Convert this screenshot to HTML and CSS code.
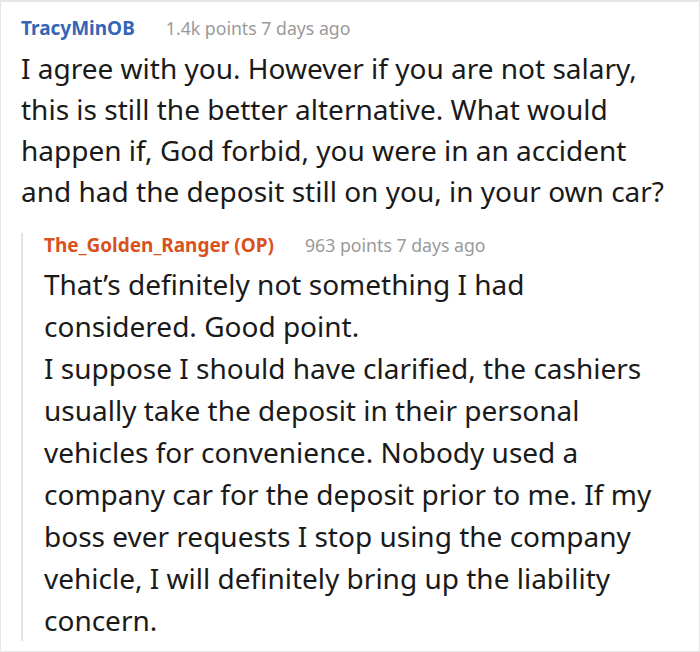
FILE: index.html
```html
<!DOCTYPE html>
<html>
<head>
<meta charset="utf-8">
<link rel="stylesheet" href="styles.css">
</head>
<body>
<div class="thread">
  <div class="comment">
    <div class="meta"><span class="user user-blue">TracyMinOB</span><span class="info">1.4k points 7 days ago</span></div>
    <p class="text">I agree with you. However if you are not salary, this is still the better alternative. What would happen if, God forbid, you were in an accident and had the deposit still on you, in your own car?</p>
    <div class="reply">
      <div class="meta"><span class="user user-orange">The_Golden_Ranger (OP)</span><span class="info">963 points 7 days ago</span></div>
      <p class="text">That’s definitely not something I had considered. Good point.<br>I suppose I should have clarified, the cashiers usually take the deposit in their personal vehicles for convenience. Nobody used a company car for the deposit prior to me. If my boss ever requests I stop using the company vehicle, I will definitely bring up the liability concern.</p>
    </div>
  </div>
</div>
</body>
</html>
```
FILE: styles.css
```css
html, body {
  margin: 0;
  padding: 0;
  background: #fff;
}
.thread {
  width: 700px;
  height: 652px;
  box-sizing: border-box;
  border: 1px solid #e6e6e6;
  border-top-width: 2px;
  font-family: "Noto Sans", "Open Sans", sans-serif;
  color: #1a1a1a;
  overflow: hidden;
}
.comment {
  padding: 14px 31px 0 20px;
}
.meta {
  line-height: 24px;
  display: flex;
  align-items: baseline;
}
.user {
  font-weight: 700;
  font-size: 19px;
}
.user-blue { color: #3566b4; }
.user-orange { color: #d8521d; }
.info {
  color: #9a9a9a;
  font-size: 17.7px;
  margin-left: 31px;
}
.text {
  margin: 8px 0 0 0;
  font-size: 28px;
  line-height: 41px;
}
.reply {
  margin-top: 21px;
  border-left: 2px solid #e2e2e2;
  padding-left: 21px;
  padding-right: 13px;
}
.reply .text {
  margin: 6px 0 -11px 0;
  line-height: 42px;
}
```
